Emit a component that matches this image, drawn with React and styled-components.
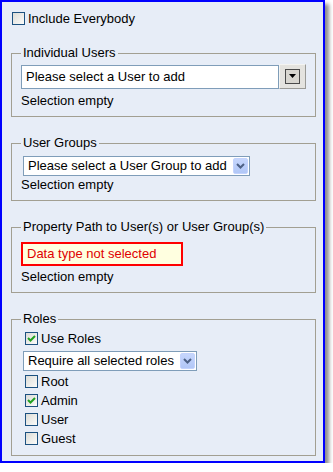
import React from "react";
import styled, { createGlobalStyle } from "styled-components";

const GlobalStyle = createGlobalStyle`
  body {
    margin: 0;
    background: #ffffff;
    font-family: "Liberation Sans", Arial, sans-serif;
    font-size: 13px;
    color: #000;
  }
`;

const Check = ({ checked }) => (
  <CheckBox>
    {checked && (
      <svg width="11" height="11" viewBox="0 0 11 11">
        <polyline
          points="2,5 4.5,7.5 9,3"
          fill="none"
          stroke="#21a121"
          strokeWidth="2"
        />
      </svg>
    )}
  </CheckBox>
);

const ComboArrow = () => (
  <ArrowButton>
    <svg width="9" height="6" viewBox="0 0 9 6">
      <polyline
        points="1,1 4.5,4.5 8,1"
        fill="none"
        stroke="#4d6185"
        strokeWidth="2"
      />
    </svg>
  </ArrowButton>
);

const roles = [
  { name: "Root", checked: false },
  { name: "Admin", checked: true },
  { name: "User", checked: false },
  { name: "Guest", checked: false },
];

const App = () => {
  return (
    <>
      <GlobalStyle />
      <Panel>
        <TopRow>
          <Check />
          <span>Include Everybody</span>
        </TopRow>

        <Group $top={20}>
          <Legend>Individual Users</Legend>
          <PickerRow>
            <PickerInput>Please select a User to add</PickerInput>
            <PickerButton>
              <PickerInner>
                <svg width="7" height="4" viewBox="0 0 7 4">
                  <polygon points="0,0 7,0 3.5,4" fill="#000" />
                </svg>
              </PickerInner>
            </PickerButton>
          </PickerRow>
          <Status $gap={4}>Selection empty</Status>
        </Group>

        <Group>
          <Legend>User Groups</Legend>
          <Combo $width={227} $top={5}>
            <span>Please select a User Group to add</span>
            <ComboArrow />
          </Combo>
          <Status $gap={1}>Selection empty</Status>
        </Group>

        <Group>
          <Legend>Property Path to User(s) or User Group(s)</Legend>
          <ErrorBox>Data type not selected</ErrorBox>
          <Status $gap={3}>Selection empty</Status>
        </Group>

        <Group $bottom={7}>
          <Legend>Roles</Legend>
          <RoleRow $first>
            <Check checked />
            <span>Use Roles</span>
          </RoleRow>
          <Combo $width={174} $top={3}>
            <span>Require all selected roles</span>
            <ComboArrow />
          </Combo>
          <RoleList>
            {roles.map((r) => (
              <RoleRow key={r.name}>
                <Check checked={r.checked} />
                <span>{r.name}</span>
              </RoleRow>
            ))}
          </RoleList>
        </Group>
      </Panel>
    </>
  );
};

export default App;

const Panel = styled.div`
  box-sizing: border-box;
  width: 325px;
  height: 463px;
  border: 2px solid #0000ff;
  background: #e7edf7;
  box-shadow: 4px 4px 4px rgba(0, 0, 0, 0.45);
  padding: 9px 7px 0 9px;
  display: flex;
  flex-direction: column;
`;

const TopRow = styled.label`
  display: flex;
  align-items: center;
  gap: 3px;
  height: 14px;
  line-height: 15px;
  margin-left: 1px;
`;

const CheckBox = styled.span`
  box-sizing: border-box;
  width: 13px;
  height: 13px;
  flex: none;
  border: 1px solid #1c5180;
  background: linear-gradient(135deg, #dcdcd7 0%, #fbfbf9 100%);
  display: flex;
  align-items: center;
  justify-content: center;
`;

const Group = styled.fieldset`
  margin: ${({ $top }) => $top ?? 18}px 0 0 0;
  padding: 0 9px ${({ $bottom }) => $bottom ?? 8}px 9px;
  border: 1px solid #a29f92;
  min-width: 0;
`;

const Legend = styled.legend`
  padding: 0 2px;
  line-height: 16px;
`;

const PickerRow = styled.div`
  display: flex;
  align-items: center;
  margin-top: 4px;
`;

const PickerInput = styled.div`
  box-sizing: border-box;
  width: 258px;
  height: 24px;
  border: 1px solid #7f9db9;
  background: #fff;
  padding-left: 4px;
  line-height: 22px;
`;

const PickerButton = styled.div`
  box-sizing: border-box;
  width: 27px;
  height: 25px;
  margin-top: -2px;
  border: 1px solid;
  border-color: #f4f4f2 #9a9a96 #9a9a96 #f4f4f2;
  background: #e4e3df;
  display: flex;
  align-items: center;
  justify-content: center;
`;

const PickerInner = styled.div`
  box-sizing: border-box;
  width: 15px;
  height: 15px;
  border: 1px solid #4a4a4a;
  background: #d8d6d0;
  display: flex;
  align-items: center;
  justify-content: center;
`;

const Combo = styled.div`
  box-sizing: border-box;
  width: ${({ $width }) => $width}px;
  height: 20px;
  margin: ${({ $top }) => $top}px 0 0 2px;
  border: 1px solid #7f9db9;
  background: #fff;
  display: flex;
  align-items: center;
  justify-content: space-between;
  padding: 1px 1px 1px 4px;
  line-height: 16px;
  white-space: nowrap;
`;

const ArrowButton = styled.span`
  box-sizing: border-box;
  width: 15px;
  height: 16px;
  flex: none;
  border: 1px solid #c3d3fd;
  border-radius: 2px;
  background: linear-gradient(180deg, #c6d6fc 0%, #b1c7f7 100%);
  display: flex;
  align-items: center;
  justify-content: center;
`;

const ErrorBox = styled.div`
  box-sizing: border-box;
  width: 162px;
  height: 24px;
  margin-top: 7px;
  border: 2px solid #ff0000;
  background: #ffffe0;
  color: #e00000;
  padding-left: 4px;
  line-height: 20px;
`;

const Status = styled.div`
  margin-top: ${({ $gap }) => $gap}px;
  line-height: 15px;
`;

const RoleList = styled.div`
  display: flex;
  flex-direction: column;
  margin-top: 1px;
`;

const RoleRow = styled.label`
  display: flex;
  align-items: center;
  gap: 3px;
  height: 19px;
  margin: ${({ $first }) => ($first ? "2px 0 0 4px" : "0 0 0 4px")};
  line-height: 15px;
`;
